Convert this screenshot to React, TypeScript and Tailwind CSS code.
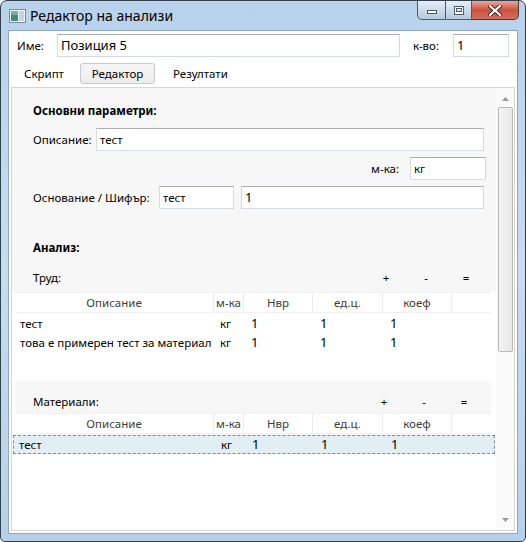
import React from "react";

const F = "font-['Noto_Sans',sans-serif]";

function TextBox({ w, children, big }: { w: string; children?: React.ReactNode; big?: boolean }) {
  return (
    <div
      className={`${w} h-[23px] flex-none flex items-center bg-white border border-[#d5d9e0] border-t-[#abadb3] pl-[3px] ${big ? "text-[13px]" : "text-[11.5px]"} text-black leading-none`}
    >
      {children}
    </div>
  );
}

function Grid({ rows, height, selected }: { rows: string[][]; height: string; selected?: boolean }) {
  const cols = ["w-[199px]", "w-[30px]", "w-[69px]", "w-[70px]", "w-[69px]", "w-[38px]"];
  const heads = ["Описание", "м-ка", "Нвр", "ед.ц.", "коеф", ""];
  return (
    <div className={`${height} bg-white flex flex-col`}>
      <div className="ml-[3px] w-[476px] h-[21px] flex border-t border-b border-[#f0f0f0]">
        {heads.map((h, i) => (
          <div
            key={i}
            className={`${cols[i]} flex-none flex items-center justify-center pt-[1px] text-[11.5px] text-[#3c3c3c] ${i < 5 ? "border-r border-[#ececec]" : ""}`}
          >
            {h}
          </div>
        ))}
      </div>
      {rows.map((r, ri) => (
        <div
          key={ri}
          className={`h-[19px] flex items-center ${selected ? "mt-[1px] ml-[1px] w-[482px] bg-[#e1eef4] border border-dashed border-[#7a8a96]" : "ml-[3px] w-[476px] pt-[2px]"}`}
        >
          <div className={`${selected ? "w-[201px]" : "w-[199px]"} flex-none pl-[5px] text-[11.5px] text-black whitespace-nowrap`}>{r[0]}</div>
          <div className="w-[30px] flex-none pl-[6px] text-[11.5px] text-black">{r[1]}</div>
          <div className="w-[69px] flex-none pl-[7px] text-[13px] text-black">{r[2]}</div>
          <div className="w-[70px] flex-none pl-[7px] text-[13px] text-black">{r[3]}</div>
          <div className="w-[69px] flex-none pl-[7px] text-[13px] text-black">{r[4]}</div>
        </div>
      ))}
    </div>
  );
}

function PMButtons({ mr }: { mr: string }) {
  return (
    <div className={`flex ${mr}`}>
      <div className="w-[40px] text-center">+</div>
      <div className="w-[40px] text-center">-</div>
      <div className="w-[40px] text-center">=</div>
    </div>
  );
}

export default function App() {
  return (
    <div className={`${F} w-[526px] h-[542px] relative flex flex-col rounded-t-[7px] rounded-b-[5px] border border-[#343f4c] bg-gradient-to-b from-[#b9d2ec] via-[#c8dcf2] to-[#b7d0ea] overflow-hidden`}>
      {/* title bar */}
      <div className="h-[29px] flex-none flex items-start relative">
        <svg className="absolute left-[8px] top-[8px]" width="17" height="14" viewBox="0 0 17 14">
          <rect x="0.5" y="0.5" width="16" height="13" fill="#f4f6f8" stroke="#7b8a99" />
          <rect x="2" y="2" width="7" height="10" fill="#3e8e7e" />
          <rect x="2" y="2" width="7" height="4" fill="#6fb3a2" />
          <rect x="10" y="2" width="5" height="10" fill="#c9d3dc" />
        </svg>
        <div className="absolute left-[29px] top-[5px] text-[14px] text-black leading-[20px]">Редактор на анализи</div>
        <div className="absolute left-[416px] top-[-1px] flex h-[20px]">
          <div className="w-[29px] h-[20px] border border-[#4d5a68] rounded-bl-[5px] bg-gradient-to-b from-[#e6eef7] via-[#cddbeb] to-[#b6c9df] flex items-center justify-center">
            <div className="w-[10px] h-[4px] mt-[4px] bg-white border border-[#4b5a6a]" />
          </div>
          <div className="w-[26px] h-[20px] border border-l-0 border-[#4d5a68] bg-gradient-to-b from-[#e6eef7] via-[#cddbeb] to-[#b6c9df] flex items-center justify-center">
            <div className="w-[10px] h-[9px] border border-[#4b5a6a] bg-white flex items-center justify-center">
              <div className="w-[6px] h-[4px] border border-[#4b5a6a] bg-[#dce6f1]" />
            </div>
          </div>
          <div className="w-[47px] h-[20px] border border-l-0 border-[#4d3a36] rounded-br-[5px] bg-gradient-to-b from-[#e9a89a] via-[#c8513d] to-[#d4715e] flex items-center justify-center">
            <svg width="14" height="11" viewBox="0 0 14 11">
              <path d="M2 1 L12 10 M12 1 L2 10" stroke="#3a2320" strokeWidth="4" strokeLinecap="square" />
              <path d="M2 1 L12 10 M12 1 L2 10" stroke="#ffffff" strokeWidth="2.2" strokeLinecap="square" />
            </svg>
          </div>
        </div>
      </div>

      {/* client */}
      <div className="flex-1 mx-[7px] mb-[7px] bg-white border border-[#8ea6bf] flex flex-col text-[11.5px] text-black">
        {/* name row */}
        <div className="h-[23px] mt-[3px] flex items-center pl-[8px] pr-[8px]">
          <div className="w-[40px] flex-none pt-[1px]">Име:</div>
          <TextBox w="w-[343px]" big>Позиция 5</TextBox>
          <div className="flex-1" />
          <div className="mr-[14px] pt-[1px]">к-во:</div>
          <TextBox w="w-[56px]" big>1</TextBox>
        </div>
        {/* tabs */}
        <div className="h-[21px] mt-[6px] flex items-center pl-[2px]">
          <div className="w-[66px] text-center">Скрипт</div>
          <div className="w-[75px] h-[21px] ml-[3px] flex items-center justify-center border border-[#c9c9c9] rounded-[3px] bg-gradient-to-b from-[#f6f6f6] to-[#ececec]">Редактор</div>
          <div className="ml-[18px]">Резултати</div>
        </div>
        {/* tab panel */}
        <div className="flex-1 mt-[3px] mx-[2px] mb-[2px] border border-[#d6d6d6] flex">
          <div className="flex-1 flex flex-col">
            <div className="bg-[#f7f7f7] flex flex-col pl-[21px] pr-[10px] pb-[5px]">
              <div className="h-[36px] pt-[14px] font-bold leading-[18px]">Основни параметри:</div>
              <div className="h-[23px] mt-[4px] flex items-center">
                <div className="w-[63px] flex-none">Описание:</div>
                <TextBox w="w-[388px]">тест</TextBox>
              </div>
              <div className="h-[23px] mt-[6px] flex items-center justify-end">
                <div className="mr-[11px]">м-ка:</div>
                <TextBox w="w-[76px]">кг</TextBox>
              </div>
              <div className="h-[23px] mt-[6px] flex items-center">
                <div className="w-[126px] flex-none">Основание / Шифър:</div>
                <TextBox w="w-[75px]">тест</TextBox>
                <div className="w-[7px]" />
                <TextBox w="w-[243px]" big>1</TextBox>
              </div>
              <div className="h-[18px] mt-[30px] font-bold leading-[18px]">Анализ:</div>
              <div className="h-[18px] mt-[12px] flex items-center justify-between leading-[18px]">
                <div>Труд:</div>
                <PMButtons mr="mr-[0px]" />
              </div>
            </div>
            <Grid
              height="h-[89px]"
              rows={[
                ["тест", "кг", "1", "1", "1"],
                ["това е примерен тест за материал", "кг", "1", "1", "1"],
              ]}
            />
            <div className="ml-[3px] w-[476px] h-[32px] bg-[#f7f7f7] flex items-end pb-[2px] pl-[18px] leading-[18px] justify-between">
              <div>Материали:</div>
              <PMButtons mr="mr-[7px]" />
            </div>
            <Grid height="flex-1" selected rows={[["тест", "кг", "1", "1", "1"]]} />
          </div>
          {/* scrollbar */}
          <div className="w-[18px] flex-none bg-[#fafafa] flex flex-col items-center">
            <svg className="mt-[9px]" width="7" height="4" viewBox="0 0 7 4">
              <path d="M0 4 L3.5 0 L7 4 Z" fill="#9a9a9a" />
            </svg>
            <div className="mt-[6px] w-[15px] h-[245px] border border-[#b9b9b9] rounded-[2px] bg-gradient-to-r from-[#f4f4f4] to-[#e8e8e8]" />
            <div className="flex-1" />
            <svg className="mb-[8px]" width="7" height="4" viewBox="0 0 7 4">
              <path d="M0 0 L7 0 L3.5 4 Z" fill="#9a9a9a" />
            </svg>
          </div>
        </div>
      </div>
    </div>
  );
}
